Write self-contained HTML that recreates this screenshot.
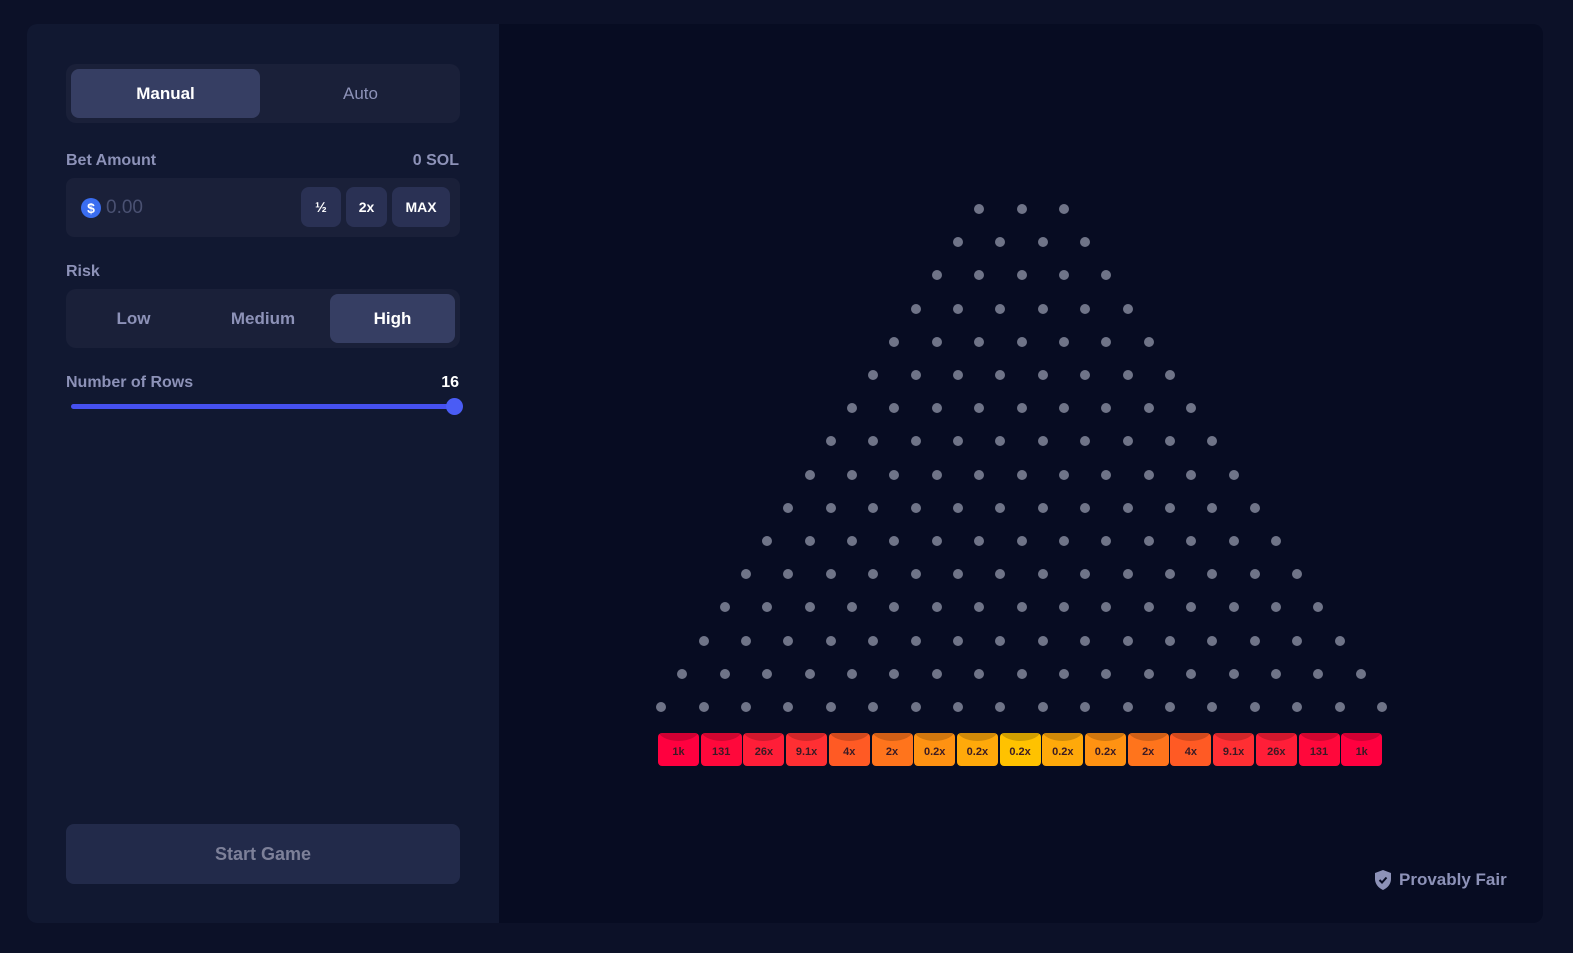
<!DOCTYPE html>
<html><head><meta charset="utf-8"><style>
*{box-sizing:border-box;margin:0;padding:0}
body{width:1573px;height:953px;background:#0c1128;font-family:"Liberation Sans",sans-serif;position:relative;overflow:hidden}
.wrap{position:absolute;left:27px;top:24px;width:1516px;height:899px;border-radius:10px;overflow:hidden;background:#070c22}
.left{position:absolute;left:0;top:0;width:472px;height:899px;background:#111831}
.abs{position:absolute}
.tabs{left:39px;top:40px;width:394px;height:59px;background:#1a2039;border-radius:10px}
.tab{position:absolute;top:5px;height:49px;border-radius:8px;display:flex;align-items:center;justify-content:center;font-size:17px;font-weight:bold}
.lbl{color:#8d92b8;font-size:16px;font-weight:bold}
.inp{left:39px;top:154px;width:394px;height:59px;background:#1a2039;border-radius:8px}
.btn{position:absolute;top:9px;height:40px;background:#2a3154;border-radius:8px;color:#fff;font-size:14px;font-weight:bold;display:flex;align-items:center;justify-content:center}
.bucket{position:absolute;height:33px;width:41px;border-radius:4px;display:flex;align-items:center;justify-content:center;font-size:11px;font-weight:bold;color:#3a1a24;padding-top:4px;overflow:hidden}
.bucket:before{content:"";position:absolute;left:0;top:-14px;width:100%;height:22px;border-radius:50%;background:rgba(0,0,0,.18)}
.bucket span{position:relative}
.peg{position:absolute;width:10px;height:10px;border-radius:50%;background:#6f7488}
</style></head><body>
<div class="wrap">
<div class="left">
 <div class="abs tabs">
  <div class="tab" style="left:5px;width:189px;background:#363e63;color:#fff">Manual</div>
  <div class="tab" style="left:200px;width:189px;color:#8d92b8;font-weight:normal">Auto</div>
 </div>
 <div class="abs lbl" style="left:39px;top:128px">Bet Amount</div>
 <div class="abs lbl" style="right:40px;top:128px">0 SOL</div>
 <div class="abs inp">
  <div class="abs" style="left:15px;top:20px;width:20px;height:20px;border-radius:50%;background:#3a6df0;color:#fff;font-size:14px;font-weight:bold;text-align:center;line-height:20px">$</div>
  <div class="abs" style="left:40px;top:19px;color:#4a5172;font-size:19px">0.00</div>
  <div class="btn" style="left:235px;width:40px">½</div>
  <div class="btn" style="left:280px;width:41px">2x</div>
  <div class="btn" style="left:326px;width:58px">MAX</div>
 </div>
 <div class="abs lbl" style="left:39px;top:239px">Risk</div>
 <div class="abs tabs" style="top:265px">
  <div class="tab" style="left:5px;width:125px;color:#8d92b8">Low</div>
  <div class="tab" style="left:132px;width:130px;color:#8d92b8">Medium</div>
  <div class="tab" style="left:264px;width:125px;background:#363e63;color:#fff">High</div>
 </div>
 <div class="abs lbl" style="left:39px;top:350px">Number of Rows</div>
 <div class="abs" style="right:40px;top:350px;color:#fff;font-size:16px;font-weight:bold">16</div>
 <div class="abs" style="left:44px;top:380px;width:385px;height:5px;border-radius:3px;background:#4650f0"></div>
 <div class="abs" style="left:419px;top:374px;width:17px;height:17px;border-radius:50%;background:#4a5cf5"></div>
 <div class="abs" style="left:39px;top:800px;width:394px;height:60px;border-radius:8px;background:#222a4a;color:#7d8099;font-size:18px;font-weight:bold;display:flex;align-items:center;justify-content:center">Start Game</div>
</div>
<div id="board"></div>
<div class="abs" style="left:1346px;top:845px;display:flex;align-items:center;color:#8d92b8;font-size:17px;font-weight:bold">
<svg width="20" height="22" viewBox="0 0 20 22" style="margin-right:6px"><path d="M10 1 L18 4 V10 C18 15 14.5 19 10 21 C5.5 19 2 15 2 10 V4 Z" fill="#8d92b8"/><path d="M6.5 11 L9 13.5 L13.5 8.5" stroke="#070c22" stroke-width="2" fill="none"/></svg>Provably Fair</div>
</div>
<script>
var b=document.getElementById('board'),h='';
for(var r=0;r<16;r++){var n=r+3;for(var i=0;i<n;i++){var x=1021.5-(n-1)*42.4/2+i*42.4-27-5,y=209+r*33.2-24-5;h+='<div class="peg" style="left:'+x.toFixed(1)+'px;top:'+y.toFixed(1)+'px"></div>';}}
var lab=['1k','131','26x','9.1x','4x','2x','0.2x','0.2x','0.2x','0.2x','0.2x','2x','4x','9.1x','26x','131','1k'];
var col=['#ff003f','#ff083b','#ff1e38','#ff2f33','#ff5a24','#ff741c','#ff9212','#ffa90a','#ffc200','#ffa90a','#ff9212','#ff741c','#ff5a24','#ff2f33','#ff1e38','#ff083b','#ff003f'];
for(var k=0;k<17;k++){var x=658+k*42.7-27;h+='<div class="bucket" style="left:'+x.toFixed(1)+'px;top:709px;background:'+col[k]+'"><span>'+lab[k]+'</span></div>';}
b.innerHTML=h;
</script>
</body></html>
